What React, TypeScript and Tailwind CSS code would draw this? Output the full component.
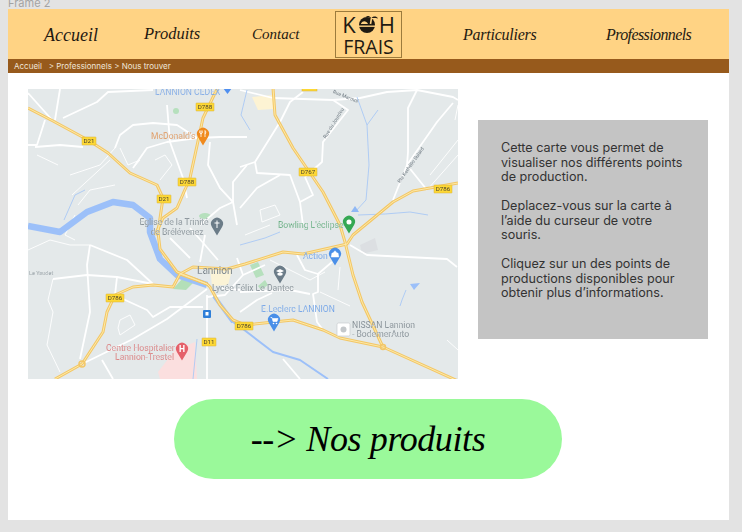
import type { ReactNode } from "react";

const whiteThick = [
  "M28 93L53 121",
  "M60 89L55 120",
  "M28 145H37L45 120",
  "M35 147L60 145L83 147",
  "M63 118L97 102L108 92L153 90",
  "M115 148L120 135L133 125L153 123L177 125L197 138",
  "M133 168L147 148L167 142L197 138L220 137L247 137",
  "M167 105L170 142L183 178L187 198",
  "M210 142L208 165L220 188L233 202L237 225",
  "M247 165L233 182L233 202",
  "M220 188L233 202L220 208L200 225",
  "M240 90L273 98L333 100L360 98L387 92L417 90L453 97L458 100",
  "M303 92L290 102L280 122L255 162L240 167",
  "M333 100L348 110L323 142L322 162L305 177",
  "M255 162L257 173L290 175L300 202L303 225",
  "M240 208L257 188L280 175",
  "M417 90L408 108L408 152L407 165L393 200",
  "M407 165L427 190",
  "M453 103L437 122L407 165",
  "M300 202L313 195L305 177",
  "M90 245L87 265L90 312L80 359",
  "M90 245L127 260L153 284",
  "M53 279L87 275L117 277L153 284",
  "M117 277L115 295",
  "M82 364L133 339L167 319L207 289",
  "M123 299L147 310L153 317L170 307L203 307",
  "M207 295V379",
  "M102 360L113 379",
  "M297 255L305 270L318 274L332 262",
  "M318 274L318 292L313 294L317 322L323 330",
  "M240 292L290 290L310 294",
  "M350 245L367 255L447 259L457 267",
  "M283 359L300 379",
  "M240 312L257 300L272 293",
  "M237 258L243 275L225 295L207 297",
  "M243 275L265 265",
  "M222 288L240 290",
  "M190 228L205 245L218 260",
  "M170 238L190 258",
  "M205 235L200 262",
];
const whiteThin = [
  "M120 148L128 165L140 160L133 168",
  "M155 160L165 155L172 165L160 180",
  "M70 175L100 165L115 148",
  "M72 195L110 160",
  "M75 215L65 235L75 240",
  "M115 185L90 190L78 205",
  "M28 250L50 240L70 245L90 245",
  "M53 279L48 300L53 312L47 345L60 372",
  "M120 320L130 315L135 325L120 335L118 328Z",
  "M37 155L58 165",
  "M427 190L458 155",
  "M260 210L275 205L280 215L262 222Z",
  "M270 260L310 280L325 272",
  "M320 292L350 306",
  "M340 267L338 290",
  "M245 235L270 225",
  "M430 175L458 140",
  "M455 120L458 105",
  "M447 340L458 350",
];
const yellowRoads = [
  "M28 108L53 121L88 140L108 153L130 173L157 185L163 198L158 232L160 249L177 272L207 284L210 287L220 305L233 320L245 325L293 320L323 330L340 338L383 347L458 381",
  "M273 88L275 115L293 148L323 192L340 225L345 242L353 275L362 302L382 345",
  "M458 183L413 191L393 202L353 235L347 244L303 254L283 252L245 264L227 269L193 267L180 274L173 287L153 285L133 287L115 295L107 312L103 332L82 364L55 379",
  "M217 89L203 118L190 178L177 208L163 218L155 235",
  "M180 274L207 284",
];
const rivers = [
  "M28 226L60 232L87 212L113 202L133 205L150 218L150 232L160 259L177 275L207 285",
  "M214 296L233 322L243 329L273 352L300 360L328 379",
];

function Badge({ x, y, t, w = 18 }: { x: number; y: number; t: string; w?: number }) {
  return (
    <g>
      <rect x={x - w / 2} y={y - 4} width={w} height={8} fill="#fdd835" stroke="#d9b23a" strokeWidth={0.5} rx={0.5} />
      <text x={x} y={y + 2.3} textAnchor="middle" fontSize={6.2} fill="#4a4230" fontFamily="Roboto, sans-serif">{t}</text>
    </g>
  );
}

function Pin({ x, y, c, r = 6, children }: { x: number; y: number; c: string; r?: number; children?: ReactNode }) {
  return (
    <g>
      <path d={`M${x} ${y + r * 1.9} L${x - r * 0.85} ${y + r * 0.5} A${r} ${r} 0 1 1 ${x + r * 0.85} ${y + r * 0.5} Z`} fill={c} />
      {children ?? <circle cx={x} cy={y} r={r * 0.42} fill="#fff" />}
    </g>
  );
}

function MapLabel({ x, y, t, c, anchor = "start", size = 8.6 }: { x: number; y: number; t: string; c: string; anchor?: "start" | "middle" | "end"; size?: number }) {
  return <text x={x} y={y} textAnchor={anchor} fontSize={size} fill={c} fontFamily="Roboto, sans-serif" stroke="#e4e9ea" strokeWidth={0.15}>{t}</text>;
}

function MapPicture() {
  return (
    <svg viewBox="28 89 430 290" className="w-[430px] h-[290px] block blur-[0.35px]">
      <rect x="28" y="89" width="430" height="290" fill="#e4e9ea" />
      <path d="M252 97L273 95L273 109L258 110Z" fill="#fdf3d3" />
      <path d="M158 372L175 350L195 342L197 379H160Z" fill="#fbdfdf" />
      <path d="M210 268L232 270L228 285L212 286Z" fill="#fbf3d6" />
      <path d="M173 289L182 279L193 283L186 290Z" fill="#b3dfb8" />
      <circle cx="176" cy="111" r="3" fill="#b6e0bd" />
      <ellipse cx="205" cy="216" rx="6" ry="3" fill="#b6e0bd" />
      <path d="M250 265L258 262L264 275L256 278Z" fill="#b6e0bd" />
      <path d="M258 286L265 280L268 285L261 290Z" fill="#b6e0bd" />
      <path d="M360 245L375 238L378 250L362 254Z" fill="#dcdfe2" />
      {whiteThin.map((d) => <path key={d} d={d} fill="none" stroke="#fff" strokeWidth={0.9} />)}
      {whiteThick.map((d) => <path key={d} d={d} fill="none" stroke="#fff" strokeWidth={1.8} strokeLinejoin="round" />)}
      <g fill="none" stroke="#a9c8f5" strokeWidth={0.9}>
        <path d="M357 97L367 125L369 165L366 200L355 212" />
        <path d="M378 110L367 125" />
        <path d="M358 215L385 214L410 212L428 215" />
        <path d="M247 90L241 115L250 130" />
        <path d="M64 220L75 195L85 190" />
        <path d="M197 339L193 379" />
        <path d="M240 245L265 238L280 232" />
        <path d="M406 290L402 300L400 306" />
      </g>
      <path d="M355 206L351 212H359Z" fill="#8fb8f5" />
      <path d="M410 284L420 283L414 290Z" fill="#9cc0f9" />
      {rivers.map((d, i) => <path key={d} d={d} fill="none" stroke="#9cc0f9" strokeWidth={i === 0 ? 6.5 : 2} strokeLinejoin="round" />)}
      <path d="M214 296L233 322" fill="none" stroke="#9cc0f9" strokeWidth={4} />
      {yellowRoads.map((d) => <path key={d} d={d} fill="none" stroke="#f3c766" strokeWidth={3} strokeLinejoin="round" />)}
      {yellowRoads.map((d) => <path key={d + "c"} d={d} fill="none" stroke="#fde9a8" strokeWidth={1} strokeLinejoin="round" />)}
      <circle cx="82" cy="364" r="3" fill="none" stroke="#f3c766" strokeWidth={1.5} />
      <circle cx="383" cy="347" r="2.5" fill="none" stroke="#f3c766" strokeWidth={1.5} />

      <rect x="302" y="88" width="15" height="3" fill="#fdd835" stroke="#d9b23a" strokeWidth={0.5} />
      <Badge x={205} y={107} t="D788" />
      <Badge x={89} y={141} t="D21" w={14} />
      <Badge x={187} y={182} t="D788" />
      <Badge x={164} y={199} t="D21" w={14} />
      <Badge x={308} y={172} t="D767" />
      <Badge x={443} y={189} t="D786" />
      <Badge x={115} y={298} t="D786" />
      <Badge x={209} y={342} t="D11" w={14} />
      <Badge x={244} y={326} t="D786" />

      <MapLabel x={155} y={95} t="LANNION CEDEX" c="#6f9fe6" />
      <path d="M223 88H232L227.500 94Z" fill="#4f8ff0" />
      <MapLabel x={151} y={139} t="McDonald's" c="#e08a45" />
      <Pin x={203} y={134} c="#f08a1d">
        <path d="M201 130.500V137M199.800 130.500V133L201 134L202.200 133V130.500M205 130.500V137M205 130.500C206 131.500 206 133 205 134" fill="none" stroke="#fff" strokeWidth={0.8} />
      </Pin>
      <MapLabel x={174} y={225} t="Eglise de la Trinité" c="#6f7a82" anchor="middle" />
      <MapLabel x={177} y={235} t="de Brélévenez" c="#6f7a82" anchor="middle" />
      <Pin x={217} y={224} c="#6b7c88">
        <path d="M217 220.500V228M214.500 223H219.500" fill="none" stroke="#fff" strokeWidth={1} />
      </Pin>
      <MapLabel x={278} y={228} t="Bowling L'éclipse" c="#4fa36e" />
      <Pin x={349} y={222} c="#34a853" />
      <MapLabel x={303} y={259} t="Action" c="#5d97e8" />
      <Pin x={335} y={254} c="#4a8fe8">
        <path d="M332 253H338L338.800 257H331.200ZM333.500 253C333.500 250.500 336.500 250.500 336.500 253" fill="#fff" stroke="#fff" strokeWidth={0.5} />
      </Pin>
      <MapLabel x={197} y={274} t="Lannion" c="#5f6a72" size={10} />
      <MapLabel x={212} y={291} t="Lycée Félix Le Dantec" c="#6f7a82" />
      <Pin x={280} y={272} c="#6b7c88">
        <path d="M276 271L280 269L284 271L280 273ZM277.500 273V275C279 276 281 276 282.500 275V273" fill="#fff" />
      </Pin>
      <MapLabel x={261} y={312} t="E.Leclerc LANNION" c="#5d97e8" />
      <Pin x={274} y={320} c="#4a8fe8">
        <path d="M270.500 317.500H272L273 321.500H277L278 318.500H272.500" fill="#fff" stroke="#fff" strokeWidth={0.6} />
        <circle cx="273.500" cy="323.500" r="0.8" fill="#fff" />
        <circle cx="276.500" cy="323.500" r="0.8" fill="#fff" />
      </Pin>
      <MapLabel x={106} y={351} t="Centre Hospitalier" c="#d9696a" />
      <MapLabel x={115} y={360} t="Lannion-Trestel" c="#d9696a" />
      <Pin x={182} y={349} c="#e5606a">
        <text x={182} y={352} textAnchor="middle" fontSize={8.5} fontWeight={700} fill="#fff" fontFamily="Roboto, sans-serif">H</text>
      </Pin>
      <rect x="203" y="310" width="8" height="8" rx="1" fill="#2f7fd8" />
      <rect x="205.500" y="312" width="3" height="3.500" fill="#fff" />
      <rect x="337" y="323" width="13" height="13" rx="1.500" fill="#fff" stroke="#c9cdd0" strokeWidth={0.7} />
      <circle cx="343.500" cy="329.500" r="3" fill="#c4c8cb" />
      <MapLabel x={352} y={328} t="NISSAN Lannion" c="#6f7a82" />
      <MapLabel x={352} y={337} t="- BodemerAuto" c="#6f7a82" />
      <MapLabel x={29} y={275} t="Le Yaudet" c="#7a858c" size={5.500} />
      <text transform="translate(345 98) rotate(22)" textAnchor="middle" fontSize={5} fill="#6f7a82" fontFamily="Roboto, sans-serif">Rue Marmol</text>
      <text transform="translate(335 124) rotate(-58)" textAnchor="middle" fontSize={5} fill="#6f7a82" fontFamily="Roboto, sans-serif">Rue du Jourdeu</text>
      <text transform="translate(412 166) rotate(-55)" textAnchor="middle" fontSize={5} fill="#6f7a82" fontFamily="Roboto, sans-serif">Rte Kerhéllo Sulard</text>
    </svg>
  );
}

function LogoMark() {
  return (
    <svg viewBox="0 0 23 20" className="w-[23px] h-[20px] block shrink-0">
      <circle cx="11" cy="11" r="8" fill="#1f1a12" />
      <rect x="2" y="11.500" width="18" height="1.400" fill="#ffd384" />
      <path d="M5 9.500C7 6 10.500 7 12 10H5Z" fill="#ffd384" />
      <path d="M14.500 10L15.500 4" stroke="#ffd384" strokeWidth={1.6} />
      <path d="M15.500 4C17.500 2 20.500 2 22 4.500C19.500 3.800 17.500 4 15.500 4ZM15.500 4C13.500 1.500 11 1.500 9.500 2.500C12 3 14 3.500 15.500 4Z" fill="#1f1a12" />
    </svg>
  );
}

function NavLink({ children, className }: { children: string; className: string }) {
  return <span className={`font-['Liberation_Serif',serif] italic leading-none text-[#1f1a12] ${className}`}>{children}</span>;
}

export default function App() {
  return (
    <div className="w-[742px] h-[532px] overflow-hidden bg-[#e3e3e3] font-['Inter',sans-serif]">
      <div className="h-[9px] pl-[8px] overflow-hidden text-[11px] leading-[6px] text-[#a3a3a3]">Frame 2</div>
      <main className="ml-[8px] w-[721px] h-[511px] bg-white flex flex-col">
        <header className="h-[50px] bg-[#ffd384] flex items-center">
          <nav className="w-[327px] h-full flex items-center pl-[36px] pt-[1px]">
            <NavLink className="w-[100px] text-[18px]">Accueil</NavLink>
            <NavLink className="w-[108px] text-[16.500px]">Produits</NavLink>
            <NavLink className="text-[15px]">Contact</NavLink>
          </nav>
          <div className="w-[67px] h-[47px] border border-[#9c7b3c] flex flex-col items-center justify-center gap-[1px] text-[#1f1a12] font-['Open_Sans',sans-serif] leading-none">
            <div className="flex items-center justify-center text-[22px] h-[24px] leading-[24px]">
              <span>K</span>
              <LogoMark />
              <span>H</span>
            </div>
            <div className="text-[19.500px] h-[20px] leading-[20px]">FRAIS</div>
          </div>
          <nav className="flex-1 h-full flex items-center pl-[61px] pt-[1px]">
            <NavLink className="w-[143px] text-[16px] tracking-[-0.25px]">Particuliers</NavLink>
            <NavLink className="text-[16px] tracking-[-0.6px]">Professionnels</NavLink>
          </nav>
        </header>
        <div className="h-[14px] bg-[#975a1c] pl-[6px] flex items-center text-[8px] text-[#f1e6da] whitespace-pre">Accueil   {">"} Professionnels {">"} Nous trouver</div>
        <section className="flex pl-[20px] pt-[16px]">
          <MapPicture />
          <aside className="ml-[20px] mt-[31px] w-[230px] h-[219px] bg-[#c4c4c4] pl-[23px] pt-[21px] text-[12.600px] leading-[14.500px] text-[#333333] flex flex-col gap-[14.500px]">
            <p>Cette carte vous permet de<br />visualiser nos différents points<br />de production.</p>
            <p>Deplacez-vous sur la carte à<br />l’aide du curseur de votre<br />souris.</p>
            <p>Cliquez sur un des points de<br />productions disponibles pour<br />obtenir plus d’informations.</p>
          </aside>
        </section>
        <div className="ml-[166px] mt-[20px] w-[388px] h-[80px] rounded-[40px] bg-[#9af99a] flex items-center justify-center font-['Liberation_Serif',serif] italic text-[36px] tracking-[-0.4px] leading-none text-black">
          {"--> Nos produits"}
        </div>
      </main>
    </div>
  );
}
